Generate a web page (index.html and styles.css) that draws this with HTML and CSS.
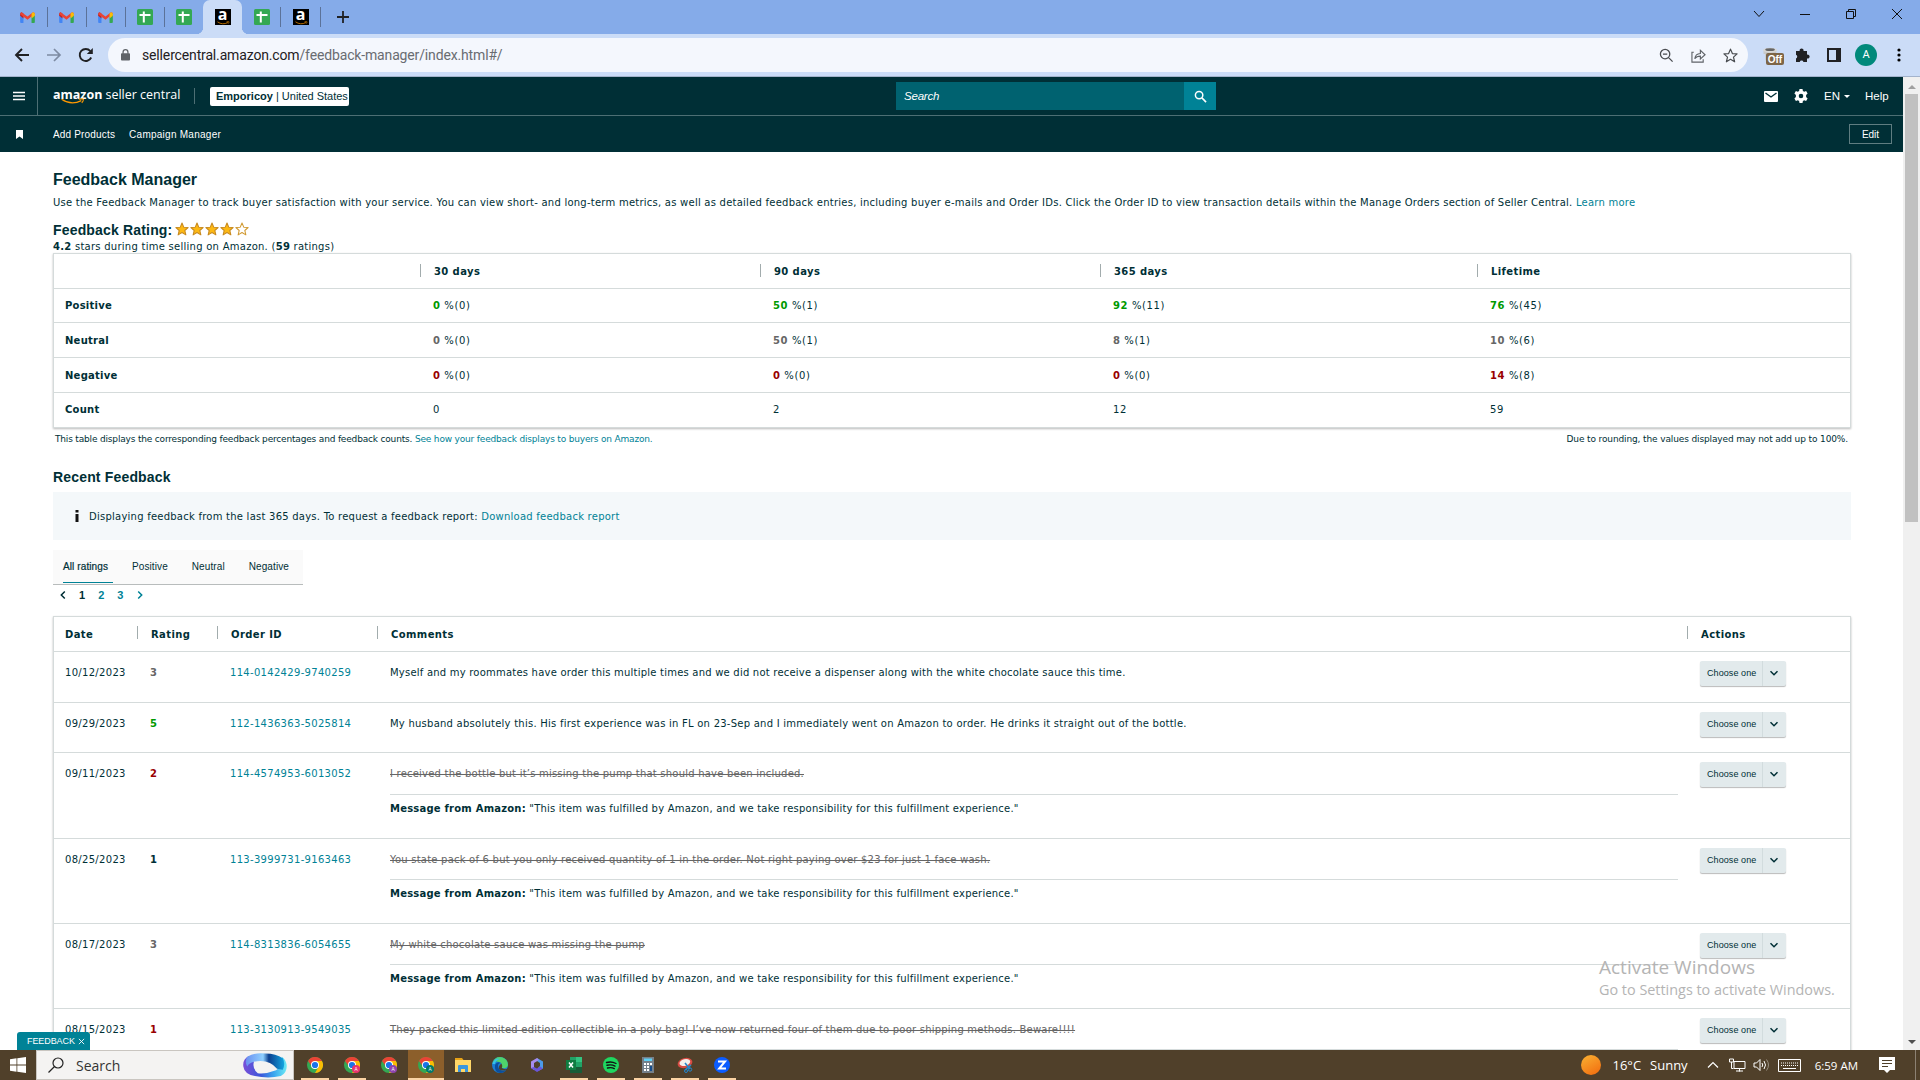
FILE: index.html
```html
<!DOCTYPE html>
<html lang="en">
<head>
<meta charset="utf-8">
<title>Feedback Manager</title>
<link rel="stylesheet" href="styles.css">
</head>
<body>
<svg class="defs" width="0" height="0" aria-hidden="true">
  <defs>
    <symbol id="gmail" viewBox="0 0 16 12"><path fill="#4285f4" d="M0 3v8q0 1 1 1h2.600V5z"/><path fill="#34a853" d="M16 3v8q0 1-1 1h-2.600V5z"/><path fill="#c5221f" d="M0 2.500Q0 .500 1.500.300L3.600 1.500V7L0 4z"/><path fill="#ea4335" d="M1.500.300 8 5 14 .300q2 0 2 1.700l-8 6.500L0 2.500z"/><path fill="#fbbc04" d="M12.400 1.700 14 .300q2 0 2 2V4l-3.600 3z"/></symbol>
    <symbol id="sheets" viewBox="0 0 16 16"><rect width="16" height="16" rx="1.500" fill="#34a853"/><path d="M6.800 2.500v11M2.500 6h11" stroke="#fff" stroke-width="2" fill="none"/></symbol>
    <symbol id="smile" viewBox="0 0 28 8"><path d="M1 1.500Q12 9 23.500 3" fill="none" stroke="#f90" stroke-width="1.500"/><path d="M20.500 1.500q4-1 5.500 0 0 2-2 4" fill="none" stroke="#f90" stroke-width="1.200"/></symbol>
    <symbol id="star" viewBox="0 0 16 16"><path d="m8 1.200 2 4.700 5 .4-3.800 3.400 1.200 5L8 12l-4.400 2.700 1.200-5L1 6.300l5-.4z" stroke-linejoin="round"/></symbol>
    <symbol id="chev" viewBox="0 0 10 10"><path d="m1.500 3.200 3.500 3.500 3.500-3.500" fill="none" stroke="currentColor" stroke-width="1.500"/></symbol>
    <symbol id="chrome" viewBox="0 0 16 16"><circle cx="8" cy="8" r="8" fill="#34a853"/><path fill="#ea4335" d="M1.070 4A8 8 0 0 1 14.930 4H8L5 9.500z"/><path fill="#fbbc04" d="M14.930 4A8 8 0 0 1 8 16l3.500-6L8 4z"/><circle cx="8" cy="8" r="4" fill="#fff"/><circle cx="8" cy="8" r="3.100" fill="#1a73e8"/></symbol>
  </defs>
</svg>

<header class="browser">
  <div class="tabs">
    <div class="tab"><svg class="gm"><use href="#gmail"/></svg></div>
    <div class="tab"><svg class="gm"><use href="#gmail"/></svg></div>
    <div class="tab"><svg class="gm"><use href="#gmail"/></svg></div>
    <div class="tab"><svg class="i16"><use href="#sheets"/></svg></div>
    <div class="tab last"><svg class="i16"><use href="#sheets"/></svg></div>
    <div class="tab active"><span class="afav">a<svg><use href="#smile"/></svg></span></div>
    <div class="tab"><svg class="i16"><use href="#sheets"/></svg></div>
    <div class="tab"><span class="afav">a<svg><use href="#smile"/></svg></span></div>
    <svg class="plus" viewBox="0 0 12 12"><path d="M6 0v12M0 6h12" stroke="#202124" stroke-width="1.800"/></svg>
    <div class="winbtns">
      <svg viewBox="0 0 12 12"><path d="m1 3 5 5.500L11 3" fill="none" stroke="#111"/></svg>
      <svg viewBox="0 0 12 12"><path d="M1 6.500h10" stroke="#111"/></svg>
      <svg viewBox="0 0 12 12"><path d="M1.500 3.500h7v7h-7zM3.500 3.500v-2h7v7h-2" fill="none" stroke="#111"/></svg>
      <svg viewBox="0 0 12 12"><path d="m1 1 10 10M11 1 1 11" stroke="#111"/></svg>
    </div>
  </div>
  <div class="toolbar">
    <svg class="nav" viewBox="0 0 16 16"><path d="M15 8H2M8 2 2 8l6 6" fill="none" stroke="#202124" stroke-width="1.900"/></svg>
    <svg class="nav" viewBox="0 0 16 16"><path d="M1 8h13M8 2l6 6-6 6" fill="none" stroke="#7d8ba3" stroke-width="1.700"/></svg>
    <svg class="nav" viewBox="0 0 16 16"><path d="M13.200 10.500A6 6 0 1 1 12.300 4" fill="none" stroke="#202124" stroke-width="1.900"/><path d="M14.800 1v6h-6z" fill="#202124"/></svg>
    <div class="omnibox">
      <svg class="lock" viewBox="0 0 10 13"><rect y="4.500" width="10" height="8" rx="1" fill="#5f6368"/><path d="M2.300 5V3.300a2.700 2.700 0 0 1 5.400 0V5" fill="none" stroke="#5f6368" stroke-width="1.400"/></svg>
      <div class="url"><b>sellercentral.amazon.com</b>/feedback-manager/index.html#/</div>
      <div class="omni-icons">
        <svg viewBox="0 0 16 16"><path d="M6.500 1.500a5 5 0 1 1 0 10 5 5 0 0 1 0-10zM10 10l4.500 4.500M4.200 6.500h4.600" fill="none" stroke="#4a4d51" stroke-width="1.400"/></svg>
        <svg viewBox="0 0 16 16"><path d="M3 4.500H1v10.500h12v-3M4 11.500c.5-4 2.500-5.500 6-5.700V2.500l5 4.700-5 4.500V8.700c-2.500 0-4.500.6-6 2.800z" fill="none" stroke="#5f6368" stroke-width="1.200"/></svg>
        <svg viewBox="0 0 16 16"><use href="#star" fill="none" stroke="#4a4d51" stroke-width="1.300"/></svg>
      </div>
    </div>
    <div class="ext"><svg viewBox="0 0 18 16"><path d="M1 4h15l-1 4h-1v8h-2V9H5v6H3V8H1z" fill="#c9cac9"/><ellipse cx="8.500" cy="3.500" rx="8" ry="2.700" fill="#d8d8d6"/><ellipse cx="8.500" cy="3" rx="5.500" ry="1.500" fill="#666"/></svg><span class="off">Off</span></div>
    <svg class="ic puzzle" viewBox="0 0 16 16"><path fill="#202124" d="M2 4h3.700a2 2 0 1 1 3.800 0H13v3.700a2 2 0 1 1 0 3.800V15H9.500a2 2 0 0 0-3.800 0H2v-3.600a2 2 0 0 0 0-3.700z"/></svg>
    <svg class="ic side" viewBox="0 0 14 14"><path fill="#202124" fill-rule="evenodd" d="M0 0h14v14H0zM2 2v10h7V2z"/></svg>
    <span class="avatar">A</span>
    <svg class="dots" viewBox="0 0 4 14"><circle cx="2" cy="2" r="1.600"/><circle cx="2" cy="7" r="1.600"/><circle cx="2" cy="12" r="1.600"/></svg>
  </div>
</header>

<div class="viewport">
<div class="page">
  <nav class="topnav">
    <div class="burger"><svg viewBox="0 0 12 10"><path d="M0 1.500h12M0 5h12M0 8.500h12" stroke="#fff" stroke-width="1.400"/></svg></div>
    <div class="logo"><b>amazon</b><span>seller central</span><svg><use href="#smile"/></svg></div>
    <div class="account"><b>Emporicoy</b> | United States</div>
    <div class="search"><div class="field">Search</div><div class="go"><svg viewBox="0 0 14 14"><circle cx="5.500" cy="5.500" r="4" fill="none" stroke="#fff" stroke-width="1.600"/><path d="m8.500 8.500 4.500 4.500" stroke="#fff" stroke-width="1.700"/></svg></div></div>
    <svg class="mail" viewBox="0 0 14 11"><rect width="14" height="11" rx="1" fill="#fff"/><path d="m1.500 2 5.500 4 5.500-4" fill="none" stroke="#002f36" stroke-width="1.400"/></svg>
    <svg class="gear" viewBox="0 0 14 14"><path fill="#fff" fill-rule="evenodd" d="M5.500 0h3l.4 2 1.300.7 1.900-.7 1.500 2.600-1.500 1.300v2.200l1.500 1.300-1.500 2.600-1.900-.7-1.300.7-.4 2h-3l-.4-2-1.300-.7-1.900.7L.400 9.400l1.500-1.300V5.900L.400 4.600 1.900 2l1.900.7L5.100 2zM7 4.700a2.300 2.300 0 1 0 0 4.600 2.300 2.300 0 0 0 0-4.600z"/></svg>
    <span class="lang">EN<i></i></span>
    <span class="help">Help</span>
  </nav>
  <nav class="subnav">
    <svg viewBox="0 0 7 9"><path d="M0 0h7v9L3.500 6.500 0 9z" fill="#fff"/></svg>
    <a class="add">Add Products</a><a class="camp">Campaign Manager</a>
    <button>Edit</button>
  </nav>
  <main>
    <h1>Feedback Manager</h1>
    <p class="intro">Use the Feedback Manager to track buyer satisfaction with your service. You can view short- and long-term metrics, as well as detailed feedback entries, including buyer e-mails and Order IDs. Click the Order ID to view transaction details within the Manage Orders section of Seller Central. <a>Learn more</a></p>
    <h2 class="rate"><span>Feedback Rating:</span><i class="stars"><svg class="on"><use href="#star"/></svg><svg class="on"><use href="#star"/></svg><svg class="on"><use href="#star"/></svg><svg class="on"><use href="#star"/></svg><svg><use href="#star"/></svg></i></h2>
    <p class="avg"><b>4.2</b> stars during time selling on Amazon. (<b>59</b> ratings)</p>
    <div class="card summary">
      <div class="row head"><b></b><b>30 days</b><b>90 days</b><b>365 days</b><b>Lifetime</b></div>
      <div class="row r34"><b>Positive</b><span><b class="pos">0</b> %(0)</span><span><b class="pos">50</b> %(1)</span><span><b class="pos">92</b> %(11)</span><span><b class="pos">76</b> %(45)</span></div>
      <div class="row low"><b>Neutral</b><span><b class="neu">0</b> %(0)</span><span><b class="neu">50</b> %(1)</span><span><b class="neu">8</b> %(1)</span><span><b class="neu">10</b> %(6)</span></div>
      <div class="row low"><b>Negative</b><span><b class="neg">0</b> %(0)</span><span><b class="neg">0</b> %(0)</span><span><b class="neg">0</b> %(0)</span><span><b class="neg">14</b> %(8)</span></div>
      <div class="row r34"><b>Count</b><span>0</span><span>2</span><span>12</span><span>59</span></div>
    </div>
    <div class="notes"><span class="n1">This table displays the corresponding feedback percentages and feedback counts. <a>See how your feedback displays to buyers on Amazon.</a></span><span class="n2">Due to rounding, the values displayed may not add up to 100%.</span></div>
    <h2 class="recent">Recent Feedback</h2>
    <div class="alert"><svg viewBox="0 0 4 12"><path d="M.500 0h3v2.400h-3zM.500 4h3v8h-3z" fill="#111"/></svg><span>Displaying feedback from the last 365 days. To request a feedback report: <a>Download feedback report</a></span></div>
    <div class="filters"><span class="sel">All ratings</span><span>Positive</span><span>Neutral</span><span>Negative</span></div>
    <div class="pager"><svg class="prev"><use href="#chev"/></svg><b>1</b><a>2</a><a>3</a><svg class="next"><use href="#chev"/></svg></div>
    <div class="card feedback">
      <div class="row head"><b>Date</b><b>Rating</b><b>Order ID</b><b>Comments</b><b>Actions</b></div>
      <div class="row h51"><span>10/12/2023</span><b class="neu">3</b><a>114-0142429-9740259</a><div><p>Myself and my roommates have order this multiple times and we did not receive a dispenser along with the white chocolate sauce this time.</p></div><div class="choose"><span>Choose one</span><svg><use href="#chev"/></svg></div></div>
      <div class="row h50"><span>09/29/2023</span><b class="pos">5</b><a>112-1436363-5025814</a><div><p>My husband absolutely this. His first experience was in FL on 23-Sep and I immediately went on Amazon to order. He drinks it straight out of the bottle.</p></div><div class="choose"><span>Choose one</span><svg><use href="#chev"/></svg></div></div>
      <div class="row h86"><span>09/11/2023</span><b class="neg">2</b><a>114-4574953-6013052</a><div><p class="struck">I received the bottle but it’s missing the pump that should have been included.</p><p class="msg"><b>Message from Amazon:</b> "This item was fulfilled by Amazon, and we take responsibility for this fulfillment experience."</p></div><div class="choose"><span>Choose one</span><svg><use href="#chev"/></svg></div></div>
      <div class="row h85"><span>08/25/2023</span><b class="one">1</b><a>113-3999731-9163463</a><div><p class="struck">You state pack of 6 but you only received quantity of 1 in the order. Not right paying over $23 for just 1 face wash.</p><p class="msg"><b>Message from Amazon:</b> "This item was fulfilled by Amazon, and we take responsibility for this fulfillment experience."</p></div><div class="choose"><span>Choose one</span><svg><use href="#chev"/></svg></div></div>
      <div class="row h85"><span>08/17/2023</span><b class="neu">3</b><a>114-8313836-6054655</a><div><p class="struck">My white chocolate sauce was missing the pump</p><p class="msg"><b>Message from Amazon:</b> "This item was fulfilled by Amazon, and we take responsibility for this fulfillment experience."</p></div><div class="choose"><span>Choose one</span><svg><use href="#chev"/></svg></div></div>
      <div class="row h85"><span>08/15/2023</span><b class="neg">1</b><a>113-3130913-9549035</a><div><p class="struck">They packed this limited edition collectible in a poly bag! I’ve now returned four of them due to poor shipping methods. Beware!!!!</p></div><div class="choose"><span>Choose one</span><svg><use href="#chev"/></svg></div></div>
    </div>
  </main>
</div>
<div class="scroll"><i class="up"></i><div class="thumb"></div><i class="down"></i></div>
<div class="fbtab">FEEDBACK<svg viewBox="0 0 8 8"><path d="m1 1 6 6M7 1 1 7" stroke="#fff"/></svg></div>
<div class="activate"><div>Activate Windows</div><p>Go to Settings to activate Windows.</p></div>
</div>

<footer class="taskbar">
  <div class="start"><svg viewBox="0 0 16 16"><path fill="#fff" d="M0 2.200 6.500 1.300V7.600H0zM7.300 1.200 16 0v7.600H7.300zM0 8.400h6.500v6.300L0 13.800zM7.300 8.400H16V16l-8.700-1.200z"/></svg></div>
  <div class="tsearch"><svg class="mag" viewBox="0 0 16 16"><circle cx="10" cy="6" r="5" fill="none" stroke="#222" stroke-width="1.200"/><path d="M6.500 9.500.500 15.500" stroke="#222" stroke-width="1.300"/></svg><span>Search</span>
    <svg class="ribbon" viewBox="0 0 46 26"><defs><linearGradient id="ra"><stop offset="0" stop-color="#6a8ff0"/><stop offset=".45" stop-color="#8fd0ff"/><stop offset=".6" stop-color="#0b3f8f"/><stop offset="1" stop-color="#12a5e0"/></linearGradient><linearGradient id="rb"><stop offset="0" stop-color="#7a4fd8"/><stop offset=".4" stop-color="#3b55d9"/><stop offset=".7" stop-color="#3aa6ee"/><stop offset="1" stop-color="#6aeaf5"/></linearGradient></defs>
      <path fill="url(#rb)" d="M7 3Q0 6 1 14q1 8 12 10 14 3 27 0 7-4 6-12-1-5-5-8 1 10-6 14-10 4-19 3-6-5-4-12z"/>
      <path fill="url(#ra)" d="M5 4Q13-1 24 .500q11 0 18 5 3 6 0 12l-6-1Q28 6 12 9q-5 1-7 5-3-5 0-10z"/></svg></div>
  <div class="app run"><svg><use href="#chrome"/></svg></div>
  <div class="app run"><svg><use href="#chrome"/></svg><em class="pk">A</em></div>
  <div class="app"><svg><use href="#chrome"/></svg><em class="pu">A</em></div>
  <div class="app run cur"><svg><use href="#chrome"/></svg><em class="te">A</em></div>
  <div class="app"><svg viewBox="0 0 16 16"><path fill="#e8a317" d="M0 1h7l1.500 2H0z"/><path fill="#ffd768" d="M0 3h16v12H0z"/><path fill="#3a96dd" d="M3 15V9q0-1 1-1h8q1 0 1 1v6h-3v-3H6v3z"/></svg></div>
  <div class="app"><svg viewBox="0 0 16 16"><circle cx="8" cy="8" r="8" fill="#1b7fd4"/><path d="M.500 6Q3-1 10 .300q6 2 6 7.700-1 4-6 3 1-3-1-5-4-3-8.500 0z" fill="#4fd36b"/><path d="M.300 7Q3 0 9 2q-5 0-6 5z" fill="#35c1e8"/><path d="M6 9q0 4 5 5 3 0 4-2-2 4-7 4-6-1-5-8 2-4 6-2-3 0-3 3z" fill="#0c4f9c"/><path d="M9.500 6.500q1.500 3 .3 4.500 3 2 6.200.500l-1 1.500q-6 1.500-8-1-1-3 2.500-5.500z" fill="#50402a"/></svg></div>
  <div class="app"><svg viewBox="0 0 16 16"><path fill="#4c9be8" d="m8 1 6 3.500v7L9 14V11l2-2V6L8 4z"/><path fill="#a68cf0" d="M8 1 2 4.500V11l3 2V6l5-3z"/><path fill="#6a55d8" d="m2 11 6 4 6-3.500-3-2L8 11.500 5 10z"/></svg></div>
  <div class="app run"><svg viewBox="0 0 16 16"><path fill="#21a366" d="M4 0h12v16H4z"/><path fill="#33c481" d="M10 0h6v5h-6z"/><path fill="#185c37" d="M4 10h12v6H4z"/><rect y="3" width="10" height="10" fill="#107c41"/><path d="m3 5.500 4 5M7 5.500l-4 5" stroke="#fff" stroke-width="1.500"/></svg></div>
  <div class="app run"><svg viewBox="0 0 16 16"><circle cx="8" cy="8" r="8" fill="#1ed760"/><path d="M3.500 5.500q5-1.500 9.500 1M4 8.300q4.500-1.200 8 .8M4.500 11q4-1 6.800.600" fill="none" stroke="#111" stroke-width="1.400" stroke-linecap="round"/></svg></div>
  <div class="app run"><svg viewBox="0 0 16 16"><path fill="#75808a" d="M2 0h12v16H2z"/><path fill="#5fd0f5" d="M4 1.500h8v2.500H4z"/><path fill="#fff" d="M4 6h2v2H4zm3 0h2v2H7zm3 0h2v2h-2zM4 9h2v2H4zm3 0h2v2H7zM4 12h2v2H4zm3 0h2v2H7z"/><path fill="#174e8c" d="M10 9h2v5h-2z"/></svg></div>
  <div class="app run"><svg viewBox="0 0 16 16"><ellipse cx="8" cy="6" rx="7.500" ry="5" fill="#d84b43" transform="rotate(-15 8 6)"/><ellipse cx="8" cy="5.500" rx="5.500" ry="3.300" fill="#f3f0ee" transform="rotate(-15 8 6)"/><path d="m8 6 5 6M14 8l-6 5" stroke="#2386cc" stroke-width="1.600"/><circle cx="13" cy="12.500" r="1.700" fill="none" stroke="#2386cc"/><circle cx="9" cy="14" r="1.500" fill="none" stroke="#2386cc"/></svg></div>
  <div class="app run"><svg viewBox="0 0 16 16"><circle cx="8" cy="8" r="8" fill="#0b5cff"/><path d="M4 4.500h7l-5.800 7H12" fill="none" stroke="#fff" stroke-width="2"/></svg></div>
  <div class="tray">
    <i class="sun"></i><span class="temp">16°C</span><span class="sunny">Sunny</span>
    <svg class="up" viewBox="0 0 12 8"><path d="m1 6.500 5-5 5 5" fill="none" stroke="#fff" stroke-width="1.200"/></svg>
    <svg class="net" viewBox="0 0 17 14"><path d="M5 3.500h11v7H5zM10.500 10.500v3M7 13h7M.500 1h4v3h-4zM2.500 4v6.500h2" fill="none" stroke="#fff"/></svg>
    <svg class="vol" viewBox="0 0 17 14"><path d="M1 5h2.500L7 1.500v11L3.500 9H1zM9 5q1.500 2 0 4M11 3q3 4 0 8" fill="none" stroke="#fff"/><path d="M13.500 1.500q4 5.500 0 11" fill="none" stroke="#998f80"/></svg>
    <svg class="kbd" viewBox="0 0 23 13"><path d="M.500.500h22v12H.500z" fill="none" stroke="#fff"/><path d="M3 4h17M3 6.500h17" stroke="#fff" stroke-dasharray="1 1"/><path d="M5 9.500h13" stroke="#fff"/></svg>
    <span class="time">6:59 AM</span>
    <svg class="note" viewBox="0 0 16 16"><path fill="#fff" d="M0 0h16v13h-5l-3 3-3-3H0z"/><path d="M3 3.500h10M3 6.500h10M3 9.500h6" stroke="#50402a"/></svg>
    <i class="edge"></i>
  </div>
</footer>
</body>
</html>
```
FILE: styles.css
```css
* { box-sizing: border-box; }
body { margin: 0; width: 1920px; height: 1080px; overflow: hidden; display: flex; flex-direction: column; font-family: "Liberation Sans", Arial, sans-serif; background: #fff; color: #002f36; }
.defs { position: absolute; }
svg { display: block; flex: none; overflow: visible; }
p, h1, h2 { margin: 0; }
a { color: #008296; }
i, em { font-style: normal; }

/* browser chrome */
.browser { flex: none; height: 77px; background: #cbdcf7; border-bottom: 1px solid #a3b3cc; }
.tabs { height: 34px; background: #85abe9; display: flex; align-items: center; padding-left: 8px; }
.tab { width: 39px; height: 34px; display: flex; align-items: center; justify-content: center; position: relative; }
.tab:not(.active):not(.last)::after { content: ""; position: absolute; right: -1px; top: 7px; width: 1px; height: 20px; background: #5b7299; }
.tab.active + .tab::after { right: 0; }
.tab.active { background: #cbdcf7; border-radius: 7px 7px 0 0; }
.tab.active::before, .tab.active::after { content: ""; position: absolute; bottom: 0; width: 7px; height: 7px; }
.tab.active::before { left: -7px; background: radial-gradient(circle at 0 0, #85abe9 7px, #cbdcf7 7.500px); }
.tab.active::after { right: -7px; background: radial-gradient(circle at 100% 0, #85abe9 7px, #cbdcf7 7.500px); }
.gm { width: 15px; height: 11px; }
.i16 { width: 16px; height: 16px; }
.afav { width: 16px; height: 16px; background: #000; color: #fff; font: bold 16px/11px "Open Sans", sans-serif; text-align: center; position: relative; }
.afav svg { position: absolute; left: 2px; top: 12px; width: 13px; height: 4px; }
.plus { width: 12px; height: 12px; margin-left: 17px; }
.winbtns { margin-left: auto; display: flex; gap: 34px; padding-right: 17px; padding-bottom: 6px; }
.winbtns svg { width: 12px; height: 12px; }
.toolbar { height: 42px; display: flex; align-items: center; padding-left: 14px; }
.nav { width: 16px; height: 16px; margin-right: 16px; }
.omnibox { width: 1640px; height: 34px; margin-left: -2px; border-radius: 17px; background: #f4f7fd; display: flex; align-items: center; padding: 0 10px 0 13px; }
.lock { width: 9px; height: 12px; }
.url { margin-left: 12px; font: 14px/20px Roboto, sans-serif; letter-spacing: -0.150px; color: #696c71; white-space: nowrap; }
.url b { font-weight: 400; color: #1f2023; }
.omni-icons { margin-left: auto; display: flex; gap: 17px; }
.omni-icons svg { width: 15px; height: 15px; }
.ext { position: relative; width: 18px; height: 16px; margin-left: 14px; }
.ext svg { width: 17px; height: 14px; }
.off { position: absolute; left: 4px; top: 6px; width: 18px; height: 12px; border-radius: 2px; background: #7d6648; color: #fff; font: bold 10px/13px "Liberation Sans", sans-serif; text-align: center; }
.puzzle { width: 16px; height: 16px; margin-left: 14px; }
.side { width: 14px; height: 14px; margin-left: 17px; }
.avatar { width: 22px; height: 22px; margin-left: 14px; border-radius: 50%; background: #00897b; color: #fff; font: 11px/22px Roboto, sans-serif; text-align: center; }
.dots { width: 4px; height: 14px; margin-left: 20px; }

/* seller navigation */
.viewport { flex: none; height: 973px; display: flex; position: relative; overflow: hidden; }
.page { width: 1903px; height: 973px; overflow: hidden; }
.topnav { height: 39px; background: #002f36; border-bottom: 1px solid #4d6f74; display: flex; align-items: center; color: #fff; }
.burger { width: 38px; height: 38px; border-right: 1px solid #4d6f74; display: flex; align-items: center; justify-content: center; }
.burger svg { width: 12px; height: 10px; }
.logo { position: relative; width: 142px; height: 16px; margin-left: 15px; border-right: 1px solid #4d6f74; display: flex; gap: 3px; font: 12.500px/15px "Open Sans", sans-serif; white-space: nowrap; align-items: center; }
.logo span, .logo b { margin-top: -4px; }
.logo svg { position: absolute; left: 7px; top: 10px; width: 26px; height: 7px; }
.account { height: 19px; margin-left: 15px; padding: 0 6px; width: 139px; background: #fff; color: #002f36; border-radius: 2px; font-size: 11px; line-height: 18px; white-space: nowrap; }
.search { display: flex; margin-left: 547px; width: 320px; height: 28px; }
.field { width: 288px; background: #006270; font: italic 11.500px/28px "Liberation Sans", sans-serif; padding-left: 8px; letter-spacing: -0.200px; }
.go { width: 32px; background: #008296; display: flex; align-items: center; justify-content: center; }
.go svg { width: 13px; height: 13px; }
.mail { width: 14px; height: 11px; margin-left: 548px; }
.gear { width: 14px; height: 14px; margin-left: 16px; }
.lang { margin-left: 16px; font-size: 11.500px; display: flex; align-items: center; }
.lang i { margin-left: 4px; border: 3.500px solid transparent; border-top-color: #fff; border-bottom: 0; }
.help { margin-left: 15px; font-size: 11.500px; }
.subnav { height: 36px; background: #002f36; display: flex; align-items: center; color: #fff; padding: 0 11px 0 16px; font-size: 10px; }
.subnav svg { width: 7px; height: 9px; margin-right: 30px; }
.subnav a { color: #fff; margin-right: 14px; white-space: nowrap; letter-spacing: 0.170px; }
.subnav .camp { letter-spacing: 0.260px; }
.subnav button { margin-left: auto; width: 43px; height: 20px; padding: 0; background: none; border: 1px solid #5f7d81; color: #fff; font: 10px "Liberation Sans", sans-serif; }

/* page content */
main { padding: 16px 53px 0; font: 10px/12px "DejaVu Sans", Verdana, sans-serif; letter-spacing: 0.240px; }
h1 { font: bold 16px/24px "Liberation Sans", sans-serif; letter-spacing: 0; }
.intro { line-height: 20px; height: 20px; padding-top: 1px; white-space: nowrap; }
h2 { font: bold 14px/20px "Liberation Sans", sans-serif; letter-spacing: 0.170px; display: flex; }
.rate { margin-top: 8px; }
.stars { display: flex; gap: 1px; margin: 2px 0 0 3px; }
.stars svg { width: 14px; height: 14px; fill: #fff; stroke: #d19a32; stroke-width: 1.200px; }
.stars .on { fill: #fdb913; stroke: #c88a20; }
.avg { line-height: 13px; height: 13px; white-space: nowrap; letter-spacing: 0.260px; }
.card { width: 1798px; border: 1px solid #d5dbdb; box-shadow: 0 1px 2px #bbb; }
.row { display: grid; height: 35px; align-items: center; border-bottom: 1px solid #d5dbdb; white-space: nowrap; }
.row:last-child { border-bottom: 0; }
.r34 { height: 34px; }
.summary { height: 175px; }
.summary .row { grid-template-columns: 368px 340px 340px 377px 1fr; padding-left: 11px; }
.summary .row > span { letter-spacing: 0.600px; }
.summary .low, .summary .head { padding-top: 2px; }
.head > b { position: relative; padding-left: 1px; letter-spacing: 0.400px; }
.head > b:first-child { padding-left: 0; }
.head > b + b::before { content: ""; position: absolute; left: -13px; top: -2px; width: 1px; height: 13px; background: #a2acad; }
.pos { color: #090; } .neu { color: #666; } .neg { color: #900; }
.notes { display: flex; justify-content: space-between; padding: 4px 2px 0; line-height: 14px; font-size: 9px; }
.n1 { letter-spacing: -0.176px; }
.n2 { letter-spacing: -0.126px; }
.recent { margin-top: 21px; }
.alert { margin-top: 5px; width: 1798px; height: 48px; background: #f4f8fa; display: flex; align-items: center; padding-left: 22px; }
.alert svg { width: 4px; height: 12px; margin-right: 10px; }
.alert span { padding-top: 2px; }
.filters { width: 250px; height: 35px; margin-top: 10px; background: #fafafa; border-bottom: 1px solid #b8bcbc; display: flex; font: 10px/33px "Liberation Sans", sans-serif; letter-spacing: 0.100px; padding: 0 14px 0 10px; justify-content: space-between; }
.sel { border-bottom: 1px solid #008296; height: 33px; width: 50px; margin-right: -5px; -webkit-text-stroke: 0.200px; }
.pager { height: 18px; display: flex; align-items: center; font: bold 11px/20px "Liberation Sans", sans-serif; letter-spacing: 0; padding: 1px 0 0 6px; gap: 13px; }
.pager svg { width: 10px; height: 10px; margin: 0 -1.500px; }
.prev { transform: rotate(90deg); } .next { transform: rotate(-90deg); color: #008296; }
.feedback { margin-top: 13px; }
.feedback .row { grid-template-columns: 85px 80px 160px 1310px 1fr; padding-left: 11px; align-items: start; }
.feedback .row > * { padding-top: 15px; }
.feedback .row > span, .feedback .row > a { letter-spacing: 0.310px; }
.feedback p { letter-spacing: 0.217px; }
.feedback .h50 p { letter-spacing: 0.243px; }
.feedback .head { align-items: center; }
.feedback .head > b { padding-top: 1px; }
.feedback .row > .choose { margin: 9px 0 0 0; padding: 0; letter-spacing: 0.080px; }
.feedback .h51 { height: 51px; } .feedback .h50 { height: 50px; } .feedback .h86 { height: 86px; } .feedback .h85 { height: 85px; }
.struck { color: #666; text-decoration: line-through; padding-bottom: 14px; border-bottom: 1px solid #d5dbdb; width: 1288px; }
.msg { padding-top: 8px; }
.h85 .struck { padding-bottom: 13px; }
.choose { width: 86px; height: 25px; background: #e2eaec; border-radius: 2px; box-shadow: 0 1px 1px #bbb; display: flex; font: 9px/24px "Liberation Sans", sans-serif; }
.choose span { width: 63px; padding-left: 7px; border-right: 1px solid #d2dcde; }
.choose svg { width: 10px; height: 10px; margin: 7px 0 0 6px; }

/* scrollbar and overlays */
.scroll { width: 17px; background: #f0f0f0; display: flex; flex-direction: column; align-items: center; padding: 8px 0 6px; }
.scroll .up { border: 4px solid transparent; border-bottom-color: #a0a0a0; border-top: 0; }
.thumb { width: 13px; height: 428px; margin-top: 5px; background: #c1c1c1; }
.scroll .down { margin-top: auto; border: 4px solid transparent; border-top-color: #505050; border-bottom: 0; }
.fbtab { position: absolute; left: 17px; bottom: 0; width: 73px; height: 18px; border-radius: 3px 3px 0 0; background: #008296; color: #fff; font-size: 9px; letter-spacing: -0.080px; line-height: 18px; display: flex; align-items: center; padding-left: 10px; gap: 3px; }
.fbtab svg { width: 7px; height: 7px; }
.activate { position: absolute; left: 1599px; top: 878px; font-family: "Open Sans", sans-serif; color: #b4b4b4; white-space: nowrap; }
.activate div { font-size: 19px; line-height: 24px; }
.activate p { font-size: 14.400px; line-height: 21px; }

/* taskbar */
.taskbar { flex: none; height: 30px; background: #50402a; display: flex; color: #fff; font-family: "Open Sans", sans-serif; }
.start { width: 36px; display: flex; align-items: center; justify-content: center; }
.start svg { width: 16px; height: 16px; }
.tsearch { width: 258px; background: #f4f3f2; border: 1px solid #c9c5c0; display: flex; align-items: center; color: #333; font-size: 14px; padding: 0 6px 0 11px; }
.mag { width: 16px; height: 16px; }
.tsearch span { margin-left: 12px; }
.ribbon { width: 45px; height: 25px; margin-left: auto; }
.app { width: 36px; margin-right: 1px; position: relative; display: flex; align-items: center; justify-content: center; }
.tsearch + .app { margin-left: 3px; }
.app svg { width: 16px; height: 16px; }
.app.run::after { content: ""; position: absolute; left: 4px; right: 4px; bottom: 0; height: 2px; background: #fbd3a4; }
.app.cur { background: #8c5f2b; }
.app.run.cur::after { left: 0; right: 0; }
.app em { position: absolute; left: 18px; top: 15px; width: 8px; height: 8px; border-radius: 50%; color: #fff; font-size: 5px; line-height: 8px; text-align: center; }
.pk { background: #e8336d; } .pu { background: #8e44ad; } .te { background: #00796b; }
.tray { margin-left: auto; display: flex; align-items: center; font-size: 13px; }
.sun { width: 20px; height: 20px; border-radius: 50%; background: linear-gradient(150deg, #f9b233, #f2690d); margin-right: 11px; }
.sunny { margin-left: 9px; }
.tray .up { width: 12px; height: 8px; margin-left: 19px; }
.net { width: 17px; height: 14px; margin-left: 10px; }
.vol { width: 17px; height: 14px; margin-left: 7px; }
.kbd { width: 23px; height: 13px; margin-left: 8px; }
.time { margin-left: 14px; font-size: 11.500px; }
.note { width: 16px; height: 16px; margin-left: 21px; }
.edge { width: 1px; height: 30px; background: #8c8173; margin: 0 4px 0 20px; }
```
